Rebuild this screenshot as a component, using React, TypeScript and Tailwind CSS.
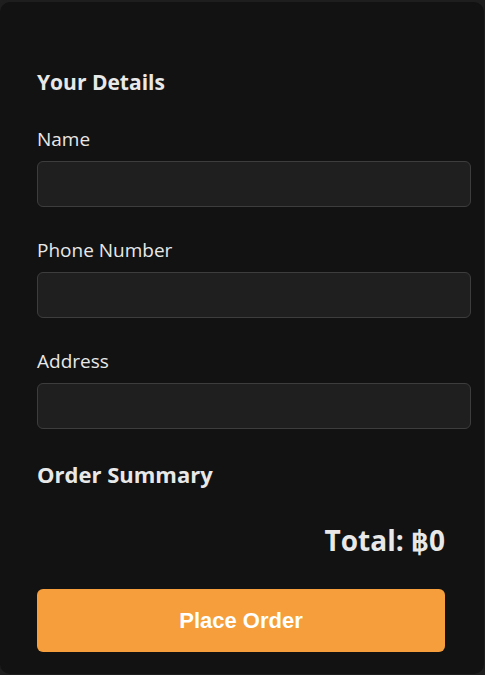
export default function App() {
  const fields = ["Name", "Phone Number", "Address"];
  return (
    <div className="min-h-screen bg-[#1e1e1e] pt-[2px]" style={{ fontFamily: "'Open Sans', 'Noto Sans', sans-serif" }}>
      <section className="w-[484px] h-[672px] bg-[#121212] rounded-[10px] pl-[37px] pr-[39px] pt-[66px] text-[#e8e8e8]">
        <h2 className="text-[21px] leading-[28px] font-bold">Your Details</h2>
        <form className="flex flex-col mt-[31px]">
          {fields.map((f) => (
            <div key={f} className="flex flex-col mb-[31px]">
              <label className="text-[19px] leading-[24px]">{f}</label>
              <input
                type="text"
                className="mt-[10px] w-[434px] h-[46px] rounded-[6px] border border-[#3d3d3d] bg-[#1f1f1f] px-3 text-white outline-none"
              />
            </div>
          ))}
        </form>
        <h2 className="text-[22px] leading-[28px] font-bold">Order Summary</h2>
        <p className="text-right text-[28px] leading-[36px] font-bold mt-[34px]">Total: ฿0</p>
        <button
          className="mt-[31px] w-full h-[63px] rounded-[6px] bg-[#f59e3b] text-white text-[22px] font-bold"
          style={{ fontFamily: "'Liberation Sans', Arial, sans-serif" }}
        >
          Place Order
        </button>
      </section>
    </div>
  );
}
